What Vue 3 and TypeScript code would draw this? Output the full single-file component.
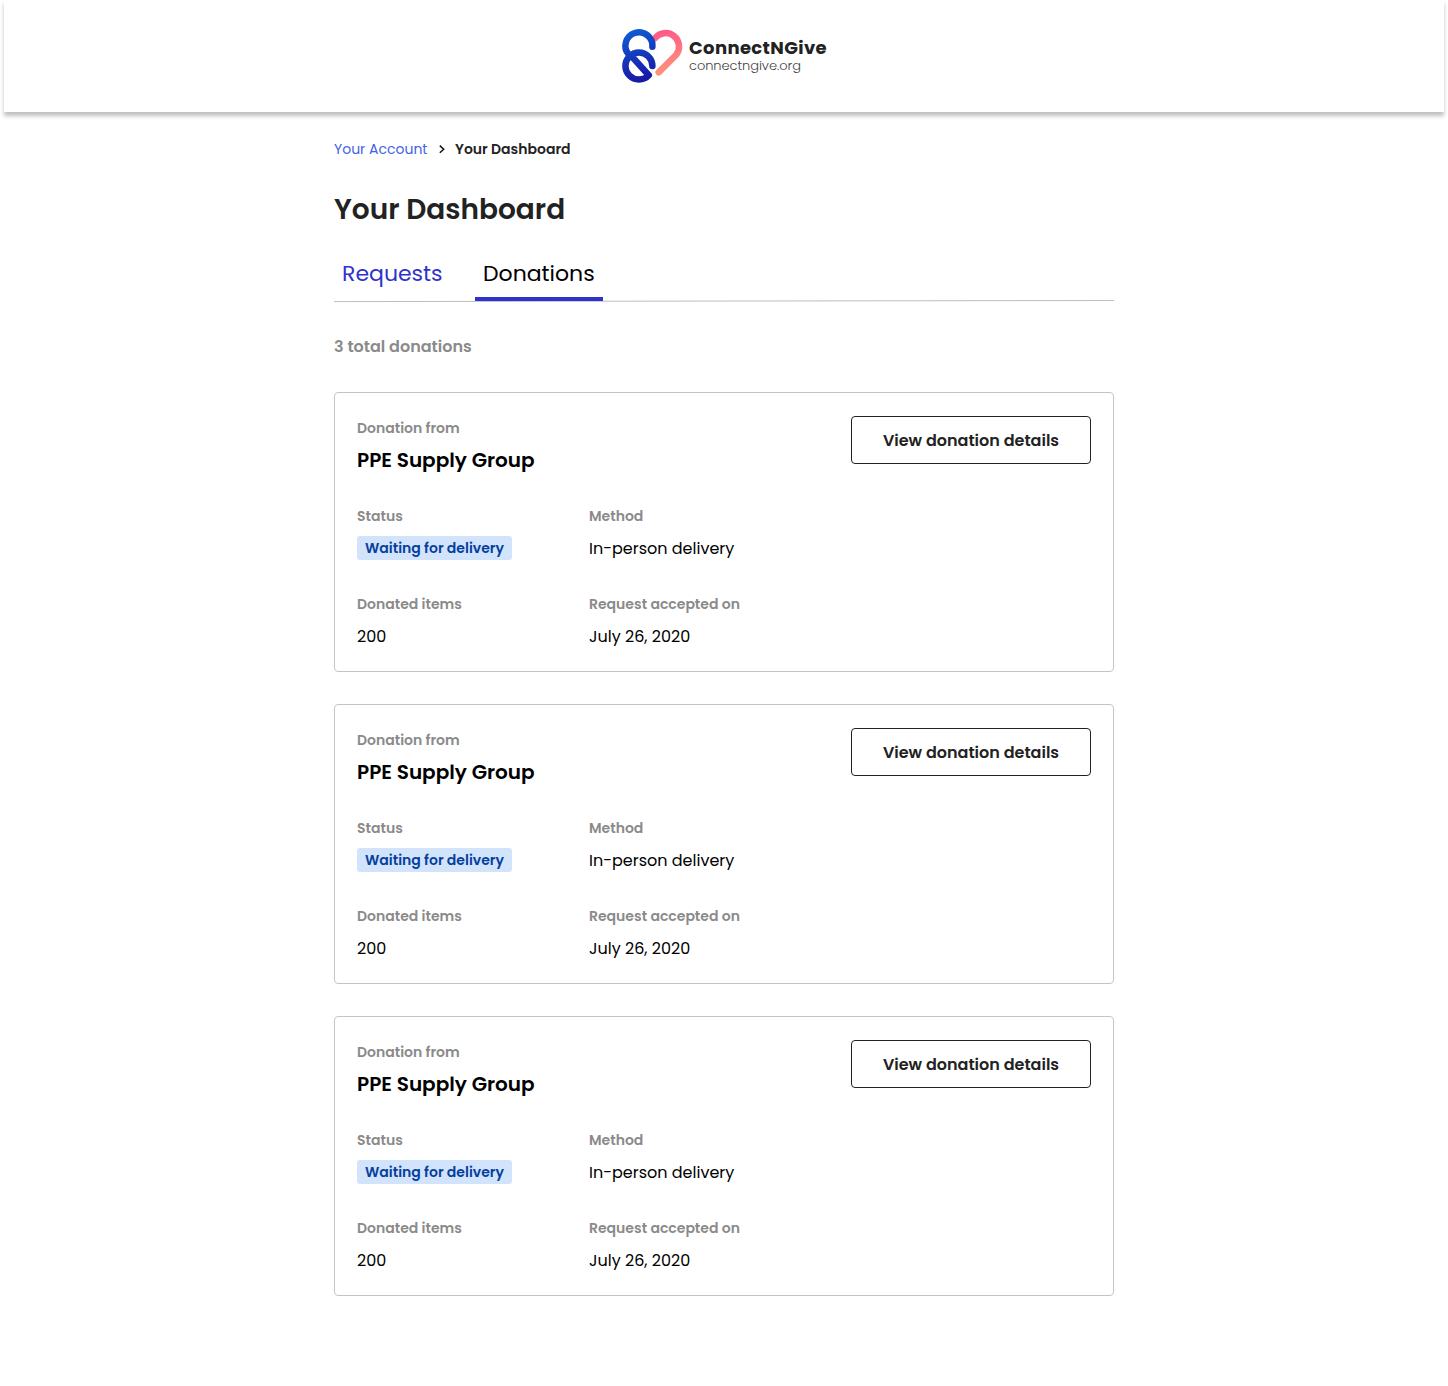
<script setup lang="ts">
interface Donation {
  id: number
  donor: string
  status: string
  method: string
  items: number
  acceptedOn: string
}

const donations: Donation[] = [1, 2, 3].map((id) => ({
  id,
  donor: 'PPE Supply Group',
  status: 'Waiting for delivery',
  method: 'In-person delivery',
  items: 200,
  acceptedOn: 'July 26, 2020',
}))
</script>

<template>
  <div class="page">
    <header class="header">
      <svg class="mark" width="70" height="60" viewBox="0 0 70 60" fill="none" stroke-width="6.5" stroke-linecap="round" stroke-linejoin="round">
        <defs>
          <linearGradient id="blue" gradientUnits="userSpaceOnUse" x1="10" y1="5" x2="26" y2="56">
            <stop offset="0" stop-color="#0f5bd3" />
            <stop offset="1" stop-color="#1a16a3" />
          </linearGradient>
          <linearGradient id="pink" gradientUnits="userSpaceOnUse" x1="40" y1="6" x2="50" y2="46">
            <stop offset="0" stop-color="#ff5a88" />
            <stop offset="1" stop-color="#ff917b" />
          </linearGradient>
        </defs>
        <path stroke="url(#pink)" d="M36.9 12.4A13.4 13.4 0 1 1 58.3 28.75L40.7 46.4" />
        <path stroke="url(#blue)" d="M34.4 20.8A13.5 13.5 0 1 0 10.8 28.7" />
        <path stroke="url(#blue)" d="M34.4 40A13.5 13.5 0 1 0 20.9 53.5C24.8 53.5 28.2 52.2 30.8 49.2L13.4 30" />
      </svg>
      <div class="brand">
        <div class="brand-name">ConnectNGive</div>
        <div class="brand-url">connectngive.org</div>
      </div>
    </header>

    <main class="content">
      <nav class="crumbs">
        <a class="crumb-link">Your Account</a>
        <svg width="6" height="10" viewBox="0 0 6 10" fill="none" stroke="#111" stroke-width="1.5"><path d="M0.8 1.6L4.7 5.2L0.8 8.8" /></svg>
        <span class="crumb-here">Your Dashboard</span>
      </nav>

      <h1 class="title">Your Dashboard</h1>

      <div class="tabs">
        <a class="tab tab-requests">Requests</a>
        <a class="tab tab-active">Donations</a>
        <svg class="rule" width="780" height="3" viewBox="0 0 780 3"><path d="M0 1.6L780 0.5" stroke="#bdbdbd" /></svg>
      </div>

      <p class="total">3 total donations</p>

      <section v-for="d in donations" :key="d.id" class="card">
        <div class="top">
          <div class="field">
            <div class="label">Donation from</div>
            <div class="donor">{{ d.donor }}</div>
          </div>
          <button class="details">View donation details</button>
        </div>
        <div class="row">
          <div class="field">
            <div class="label">Status</div>
            <div class="badge">{{ d.status }}</div>
          </div>
          <div class="field">
            <div class="label">Method</div>
            <div class="value">{{ d.method }}</div>
          </div>
        </div>
        <div class="row">
          <div class="field">
            <div class="label">Donated items</div>
            <div class="value">{{ d.items }}</div>
          </div>
          <div class="field">
            <div class="label">Request accepted on</div>
            <div class="value">{{ d.acceptedOn }}</div>
          </div>
        </div>
      </section>
    </main>
  </div>
</template>

<style>
body {
  background: #fff;
}
</style>

<style scoped>
.page {
  height: 1386px;
  overflow: hidden;
  font-family: Poppins, Inter, 'Open Sans', sans-serif;
  font-feature-settings: 'cv11';
  color: #000;
}
.header {
  box-sizing: border-box;
  height: 112px;
  margin: 0 4px;
  padding-left: 614px;
  display: flex;
  background: #fff;
  box-shadow: 0 4px 4px rgba(0, 0, 0, 0.25);
}
.mark {
  margin-top: 26px;
}
.brand {
  margin: 36px 0 0 1px;
  white-space: nowrap;
}
.brand-name {
  height: 20px;
  line-height: 24px;
  font-size: 18px;
  font-weight: 700;
  letter-spacing: 0.36px;
  color: #222;
}
.brand-url {
  line-height: 20px;
  font-size: 13px;
  font-weight: 300;
  letter-spacing: -0.06px;
  color: #444;
}
.content {
  width: 780px;
  margin: 0 auto;
  padding-top: 25px;
}
.crumbs {
  display: flex;
  align-items: center;
  height: 24px;
  font-size: 14px;
  line-height: 24px;
}
.crumb-link {
  width: 105px;
  color: #4263e6;
}
.crumb-here {
  margin-left: 10px;
  font-weight: 600;
  color: #222;
}
.title {
  margin: 28px 0 0;
  font-size: 28px;
  line-height: 42px;
  font-weight: 600;
  color: #222;
}
.tabs {
  position: relative;
  display: flex;
  gap: 24px;
  height: 48px;
  margin-top: 22px;
}
.tab {
  box-sizing: border-box;
  height: 48px;
  padding: 5px 0 0 8px;
  font-size: 22px;
  line-height: 32px;
}
.tab-requests {
  width: 117px;
  color: #2f33ca;
}
.tab-active {
  position: relative;
  z-index: 1;
  width: 128px;
  border-bottom: 4px solid #2f33ca;
}
.rule {
  position: absolute;
  left: 0;
  bottom: -2px;
}
.total {
  margin: 34px 0 33px;
  font-size: 16px;
  line-height: 24px;
  font-weight: 600;
  color: #8a8a8a;
}
.card {
  box-sizing: border-box;
  height: 280px;
  margin-bottom: 32px;
  padding: 23px 22px;
  display: flex;
  flex-direction: column;
  gap: 32px;
  border: 1px solid #c4c4c4;
  border-radius: 4px;
}
.top {
  display: flex;
  justify-content: space-between;
}
.row {
  display: flex;
}
.field {
  width: 232px;
  height: 56px;
  white-space: nowrap;
}
.label {
  margin-bottom: 8px;
  font-size: 14px;
  line-height: 24px;
  font-weight: 600;
  color: #8a8a8a;
}
.donor {
  font-size: 20px;
  line-height: 24px;
  font-weight: 600;
}
.badge {
  box-sizing: border-box;
  width: 155px;
  padding-left: 8px;
  border-radius: 3px;
  background: #d2e3fc;
  color: #063f9c;
  font-size: 14px;
  line-height: 24px;
  font-weight: 600;
}
.value {
  padding-top: 1px;
  font-size: 16px;
  line-height: 24px;
}
.details {
  box-sizing: border-box;
  width: 240px;
  height: 48px;
  padding: 0;
  border: 1px solid #222;
  border-radius: 4px;
  background: #fff;
  color: #222;
  font: inherit;
  font-feature-settings: inherit;
  font-size: 16px;
  font-weight: 600;
}
</style>
